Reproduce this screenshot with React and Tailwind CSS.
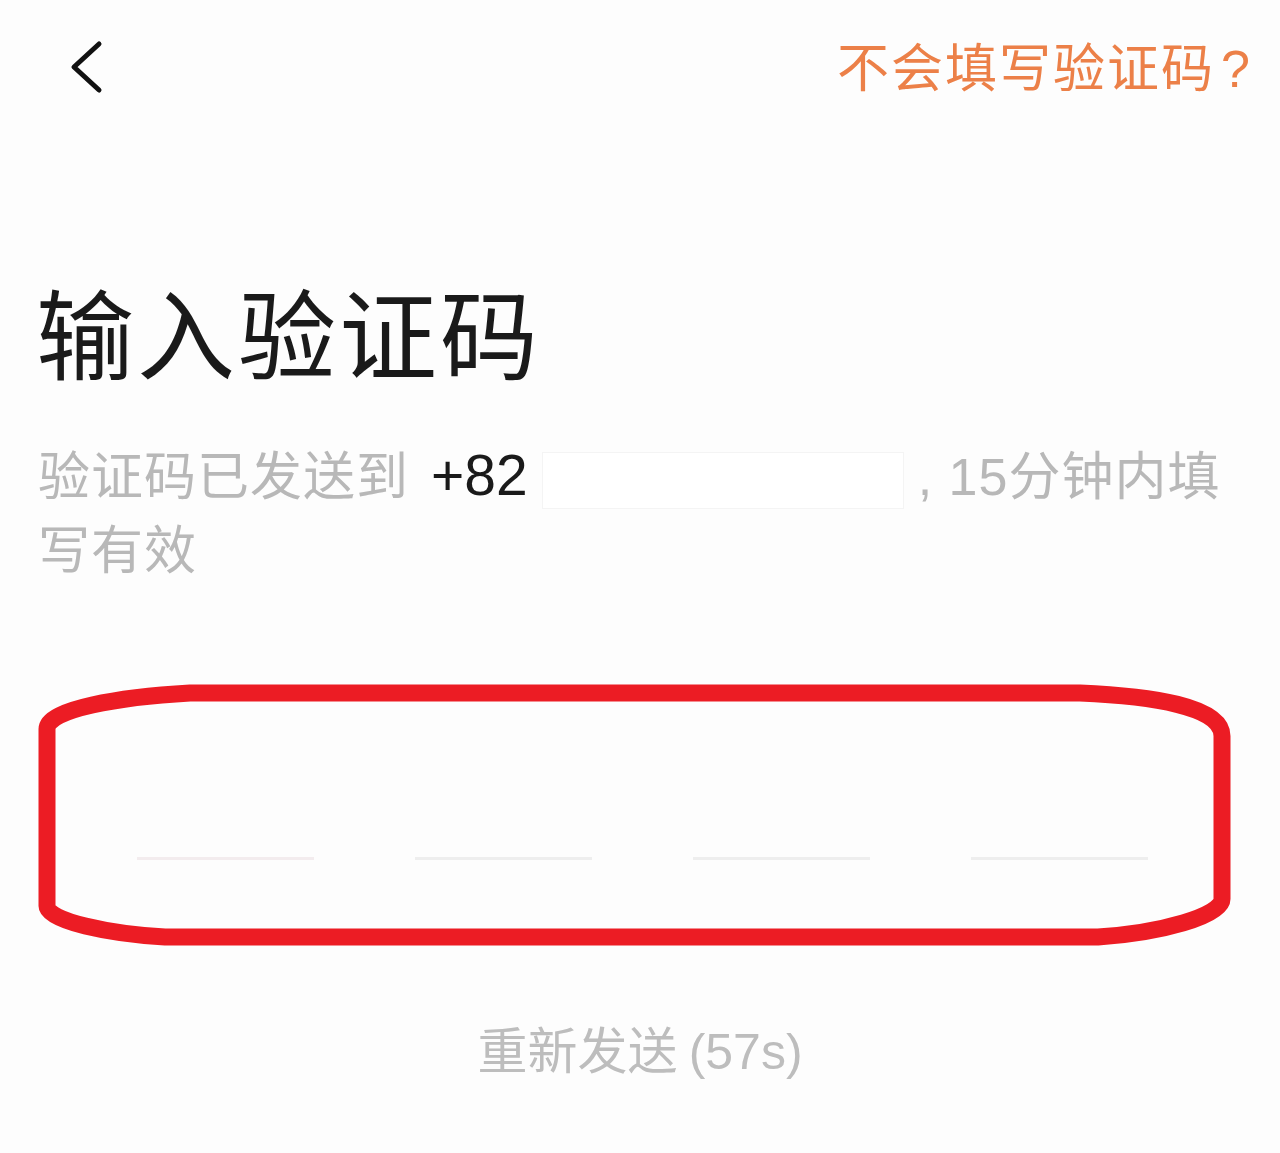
import React from 'react';

const CJK = "font-['Noto_Sans_CJK_SC','Noto_Sans',sans-serif]";
const LATIN = "font-['Liberation_Sans','Noto_Sans_CJK_SC',sans-serif]";

const BackIcon = () => (
    <svg width="40" height="56" viewBox="0 0 40 56" fill="none" className="block">
        <polyline points="30,5 5,28 30,51" stroke="#111" strokeWidth="5" strokeLinecap="round" strokeLinejoin="round" />
    </svg>
);

// hand-drawn red ring around the code inputs (annotation on the screenshot)
const RedRing = () => (
    <svg className="absolute left-0 top-0 pointer-events-none" width="1280" height="290" viewBox="0 675 1280 290" fill="none">
        <path
            d="M190 692 L1080 692 C1150 695 1222 705 1222 735 L1222 898 C1222 915 1160 932 1098 936 L165 936 C110 933 47 920 47 905 L47 728 C47 708 120 696 190 692 Z"
            stroke="#ec1c24"
            strokeWidth="17"
            strokeLinejoin="round"
        />
    </svg>
);

const App = () => {
    const dashes = [0, 1, 2, 3];

    return (
        <div className={`w-[1280px] h-[1153px] bg-[#fdfdfd] overflow-hidden flex flex-col ${CJK}`}>
            <div className="h-[134px] flex items-center justify-between pl-[69px] pr-[30px]">
                <BackIcon />
                <span className="text-[52px] text-[#ec8048] tracking-[2px]">
                    不会填写验证码<span className={`${LATIN} ml-[6px] tracking-normal`}>?</span>
                </span>
            </div>

            <h1 className="mt-[146px] pl-[36px] text-[98px] leading-none text-[#1a1a1a] font-normal tracking-[3px]">输入验证码</h1>

            <p className="mt-[60px] pl-[38px] pr-[20px] text-[52px] leading-[70px] text-[#b8b8b8] tracking-[1px]">
                验证码已发送到
                <span className={`${LATIN} ml-[22px] text-[57px] text-[#1a1a1a] tracking-normal`}>+82</span>
                <span className="inline-block align-middle w-[362px] h-[57px] mx-[14px] bg-white border border-[#f4f4f4]" />
                <span className={LATIN}>, 15</span>分钟内填写有效
            </p>

            <div className="relative mt-[94px] h-[280px]">
                <div className="absolute inset-0 flex items-end pb-[96px] pl-[137px]">
                    <div className="w-[1011px] flex justify-between">
                        {dashes.map((d) => (
                            <div key={d} className={`w-[177px] h-[3px] ${d === 0 ? 'bg-[#f3ecee]' : 'bg-[#eeeeee]'}`} />
                        ))}
                    </div>
                </div>
                <RedRing />
            </div>

            <div className="mt-[66px] flex justify-center">
                <span className="text-[50px] leading-none text-[#bdbdbd]">
                    重新发送 <span className={LATIN}>(57s)</span>
                </span>
            </div>
        </div>
    );
};

export default App;
